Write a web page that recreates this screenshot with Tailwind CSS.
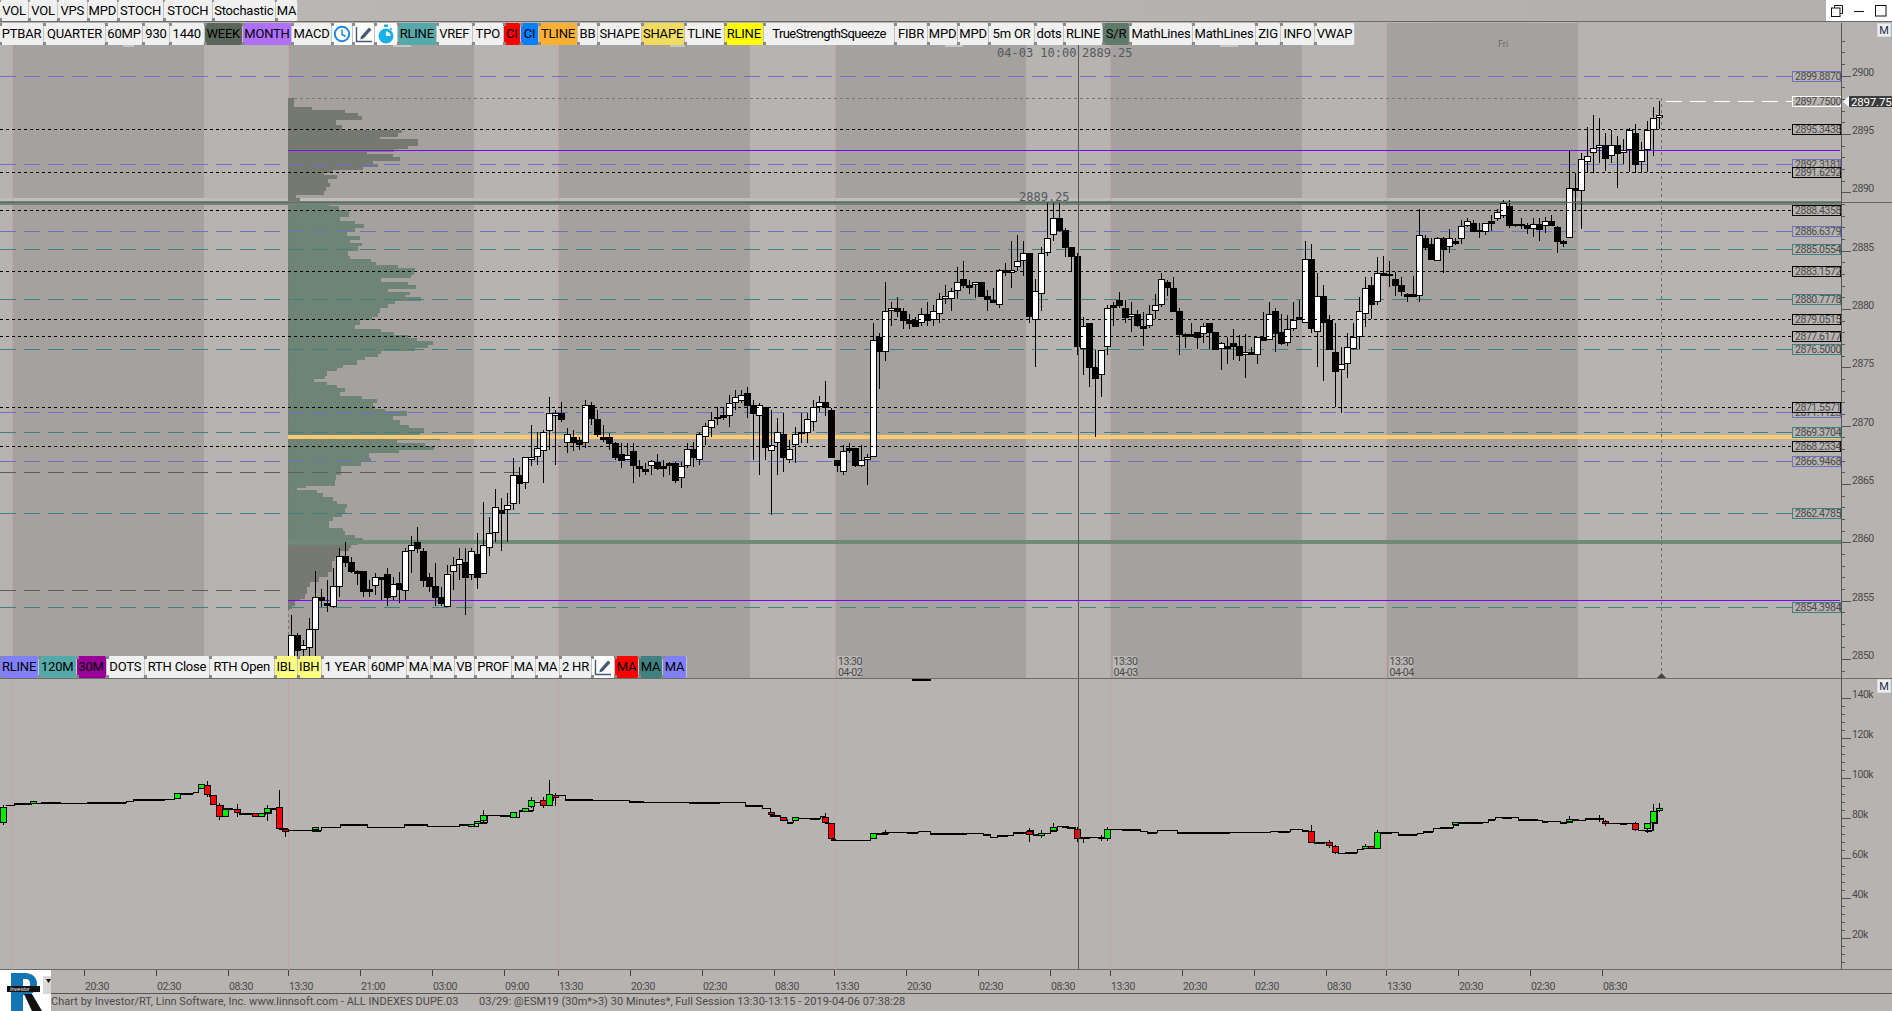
<!DOCTYPE html>
<html lang="en">
<head>
  <meta charset="UTF-8" />
  <title>Investor/RT Chart</title>
  <script src="https://cdn.jsdelivr.net/npm/@tailwindcss/browser@4"></script>
</head>
<body class="w-[1892px] h-[1011px] overflow-hidden flex flex-col bg-[#b7b3b1] font-['Roboto',sans-serif] text-black">

  <!-- top toolbar + window buttons -->
  <header class="h-[22px] shrink-0 flex justify-between border-b border-[#6a6a6a] bg-gradient-to-r from-[#bbb7b5] to-[#b3afad]">
    <div class="flex h-[21px] text-[13px] tracking-[-0.2px] [&>div]:relative [&>div]:flex [&>div]:items-center [&>div]:justify-center [&>div]:rounded-[2px] [&>div]:border-r [&>div]:border-[#c4c4c4] [&>div]:before:absolute [&>div]:before:-left-px [&>div]:before:top-0 [&>div]:before:size-[2px] [&>div]:before:bg-[#9a9a9a] [&>div]:after:absolute [&>div]:after:-left-px [&>div]:after:bottom-0 [&>div]:after:size-[3px] [&>div]:after:bg-[#8a8a8a]">
      <div class="w-[29px] bg-[#f0f0f0]">VOL</div>
      <div class="w-[29px] bg-[#f0f0f0]">VOL</div>
      <div class="w-[29.5px] bg-[#f0f0f0]">VPS</div>
      <div class="w-[30.5px] bg-[#f0f0f0]">MPD</div>
      <div class="w-[46px] bg-[#f0f0f0]">STOCH</div>
      <div class="w-[48.5px] bg-[#f0f0f0]">STOCH</div>
      <div class="w-[63.5px] bg-[#f0f0f0]">Stochastic</div>
      <div class="w-[22px] bg-[#f0f0f0]">MA</div>
    </div>
    <div class="w-[66px] h-[21px] bg-white flex items-center justify-center gap-[10px]">
      <svg width="12" height="12" viewBox="0 0 12 12" fill="none" stroke="#111"><path d="M3.5 3V.5h8v8H9" /><rect x=".5" y="3" width="8.5" height="8.5" /></svg>
      <svg width="12" height="12" viewBox="0 0 12 12" fill="none" stroke="#111"><path d="M1 6.5h10" /></svg>
      <svg width="12" height="12" viewBox="0 0 12 12" fill="none" stroke="#111"><rect x=".5" y=".5" width="10.500" height="10.500" /></svg>
    </div>
  </header>

  <!-- both chart panes -->
  <main class="relative h-[948px] shrink-0 border-b border-[#6a6a6a]">
    <svg id="chart" class="absolute inset-0" width="1892" height="948" viewBox="0 22 1892 948" shape-rendering="crispEdges"></svg>

    <!-- overlay toolbar on top of the price pane -->
    <div class="absolute left-0 top-px flex h-[21.5px] text-[13px] tracking-[-0.2px] [&>div]:relative [&>div]:flex [&>div]:items-center [&>div]:justify-center [&>div]:rounded-[2px] [&>div]:border-r [&>div]:border-[#c4c4c4] [&>div]:before:absolute [&>div]:before:-left-px [&>div]:before:top-0 [&>div]:before:size-[3px] [&>div]:before:bg-[#8a8a8a] [&>div]:after:absolute [&>div]:after:-left-px [&>div]:after:bottom-0 [&>div]:after:size-[3px] [&>div]:after:bg-[#8a8a8a]">
      <div class="w-[44px] bg-[#f0f0f0]">PTBAR</div>
      <div class="w-[62px] bg-[#f0f0f0]">QUARTER</div>
      <div class="w-[37px] bg-[#f0f0f0]">60MP</div>
      <div class="w-[27px] bg-[#f0f0f0]">930</div>
      <div class="w-[34.5px] bg-[#f0f0f0]">1440</div>
      <div class="w-[38.5px] bg-[#596659]">WEEK</div>
      <div class="w-[49px] bg-[#b070ff]">MONTH</div>
      <div class="w-[40px] bg-[#f0f0f0]">MACD</div>
      <div class="w-[21px] bg-white">
        <svg width="18" height="18" viewBox="0 0 18 18" fill="none" stroke="#1e88e5"><circle cx="9" cy="9" r="7.200" stroke-width="2" /><path d="M9 4.500V9.500L12.500 11.500" stroke-width="1.500" /></svg>
      </div>
      <div class="w-[22px] bg-white">
        <svg width="18" height="18" viewBox="0 0 18 18"><path d="M6 11.500L14 2.500l2.500 2.200L8.500 13.500 5.300 14.500z" fill="#46586f" /><path d="M1.500 2v14.500H17" fill="none" stroke="#46586f" stroke-width="1.400" /></svg>
      </div>
      <div class="w-[23px] bg-white">
        <svg width="18" height="20" viewBox="0 0 18 20"><rect x="7" y="0.500" width="4" height="2.500" fill="#1ab0e8" /><path d="M13.500 3.500l2 1.800-1 1-2-1.800z" fill="#1ab0e8" /><circle cx="9" cy="12" r="7.500" fill="#1ab0e8" /><path d="M9 12V7.500A4.500 4.500 0 0 1 13.500 12z" fill="#fff" /></svg>
      </div>
      <div class="w-[38.5px] bg-[#55aaa9]">RLINE</div>
      <div class="w-[36.5px] bg-[#f0f0f0]">VREF</div>
      <div class="w-[30.5px] bg-[#f0f0f0]">TPO</div>
      <div class="w-[17.5px] bg-[#ff0000]">CI</div>
      <div class="w-[18px] bg-[#0080ff]">CI</div>
      <div class="w-[39px] bg-[#ffb030]">TLINE</div>
      <div class="w-[20px] bg-[#f0f0f0]">BB</div>
      <div class="w-[44px] bg-[#f0f0f0]">SHAPE</div>
      <div class="w-[43px] bg-[#f0dc60]">SHAPE</div>
      <div class="w-[39.5px] bg-[#f0f0f0]">TLINE</div>
      <div class="w-[39.5px] bg-[#ffff00]">RLINE</div>
      <div class="w-[131px] bg-[#f0f0f0] tracking-[-0.55px]">TrueStrengthSqueeze</div>
      <div class="w-[33px] bg-[#f0f0f0]">FIBR</div>
      <div class="w-[30px] bg-[#f0f0f0]">MPD</div>
      <div class="w-[31px] bg-[#f0f0f0]">MPD</div>
      <div class="w-[46px] bg-[#f0f0f0]">5m OR</div>
      <div class="w-[29px] bg-[#f0f0f0]">dots</div>
      <div class="w-[39px] bg-[#f0f0f0]">RLINE</div>
      <div class="w-[27px] bg-[#607a6a]">S/R</div>
      <div class="w-[63px] bg-[#f0f0f0]">MathLines</div>
      <div class="w-[63px] bg-[#f0f0f0]">MathLines</div>
      <div class="w-[25px] bg-[#f0f0f0]">ZIG</div>
      <div class="w-[34px] bg-[#f0f0f0]">INFO</div>
      <div class="w-[40px] bg-[#f0f0f0]">VWAP</div>
    </div>

    <!-- overlay toolbar at the bottom of the price pane -->
    <div class="absolute left-0 top-[634px] flex h-[22px] text-[13px] tracking-[-0.2px] [&>div]:relative [&>div]:flex [&>div]:items-center [&>div]:justify-center [&>div]:rounded-[2px] [&>div]:border-r [&>div]:border-[#c4c4c4] [&>div]:before:absolute [&>div]:before:-left-px [&>div]:before:top-0 [&>div]:before:size-[3px] [&>div]:before:bg-[#8a8a8a] [&>div]:after:absolute [&>div]:after:-left-px [&>div]:after:bottom-0 [&>div]:after:size-[3px] [&>div]:after:bg-[#8a8a8a]">
      <div class="w-[39px] bg-[#8080ff]">RLINE</div>
      <div class="w-[37.5px] bg-[#55aaa9]">120M</div>
      <div class="w-[30px] bg-[#990099]">30M</div>
      <div class="w-[38.5px] bg-[#f0f0f0]">DOTS</div>
      <div class="w-[65px] bg-[#f0f0f0]">RTH Close</div>
      <div class="w-[64.500px] bg-[#f0f0f0]">RTH Open</div>
      <div class="w-[23px] bg-[#ffff80]">IBL</div>
      <div class="w-[24.500px] bg-[#ffff80]">IBH</div>
      <div class="w-[47px] bg-[#f0f0f0]">1 YEAR</div>
      <div class="w-[38px] bg-[#f0f0f0]">60MP</div>
      <div class="w-[24px] bg-[#f0f0f0]">MA</div>
      <div class="w-[23.500px] bg-[#f0f0f0]">MA</div>
      <div class="w-[20.500px] bg-[#f0f0f0]">VB</div>
      <div class="w-[37px] bg-[#f0f0f0]">PROF</div>
      <div class="w-[24px] bg-[#f0f0f0]">MA</div>
      <div class="w-[24px] bg-[#f0f0f0]">MA</div>
      <div class="w-[32px] bg-[#f0f0f0]">2 HR</div>
      <div class="w-[23px] bg-white">
        <svg width="18" height="18" viewBox="0 0 18 18"><path d="M6 11.500L14 2.500l2.500 2.200L8.500 13.500 5.300 14.500z" fill="#46586f" /><path d="M1.500 2v14.500H17" fill="none" stroke="#46586f" stroke-width="1.400" /></svg>
      </div>
      <div class="w-[24px] bg-[#ff0000]">MA</div>
      <div class="w-[24px] bg-[#408080]">MA</div>
      <div class="w-[24px] bg-[#8080ff]">MA</div>
    </div>

    <!-- "M" scale buttons -->
    <div class="absolute left-[1877px] top-px size-[14px] flex items-center justify-center bg-[#f0f0f0] border border-[#d8d8d8] text-[11px] leading-none text-[#202a50]">M</div>
    <div class="absolute left-[1877px] top-[657px] size-[14px] flex items-center justify-center bg-[#f0f0f0] border border-[#d8d8d8] text-[11px] leading-none text-[#202a50]">M</div>
  </main>

  <!-- logo, time axis and status line -->
  <footer class="flex flex-1 min-h-0">
    <div class="w-[51px] shrink-0 bg-white relative">
      <svg width="51" height="41" viewBox="0 0 51 41" shape-rendering="geometricPrecision">
        <path d="M11 3h14c8 0 12 5 12 11s-4 11-11 11h-3v16H11z M23 9v10h2c4 0 5-2 5-5s-1-5-5-5z" fill="#1474b4" fill-rule="evenodd" />
        <path d="M24 24h8l10 17H32z" fill="#111" />
        <rect x="7" y="16" width="33" height="6" fill="#111" />
        <text x="10" y="21" font-size="5.500" font-style="italic" font-family="Liberation Sans" fill="#fff">Investor</text>
        <rect x="43" y="6" width="8" height="18" fill="#d8d8d8" />
        <path d="M46 9h5l-2.500 4z" fill="#111" />
      </svg>
    </div>
    <div class="flex-1 flex flex-col min-w-0">
      <div class="h-[24px] shrink-0 border-b border-[#555]">
        <svg id="timeaxis" class="block" width="1841" height="23" viewBox="51 0 1841 23"></svg>
      </div>
      <div class="flex h-[17px] items-center text-[11px] tracking-[0.03px] text-[#4a4a4a] whitespace-nowrap">
        <span class="w-[428px]">Chart by Investor/RT, Linn Software, Inc. www.linnsoft.com - ALL INDEXES DUPE.03</span>
        <span>03/29: @ESM19 (30m*>3) 30 Minutes*, Full Session 13:30-13:15 - 2019-04-06 07:38:28</span>
      </div>
    </div>
  </footer>

  <script>
    const LABEL = 'font-family="Roboto" font-size="10.500" letter-spacing="-0.45" fill="#4a4a4a" shape-rendering="auto"';
    const BLUE = '#7070c0', TEAL = '#3f8080', BLK = '#000';
    const priceY = p => 75.7 + (2900 - p) * 11.666;
    let s = '';

    // ---- session bands + pane background
    [[12.5, 191.5], [288, 186], [558.5, 191.5], [835, 191], [1110.5, 191.5], [1386.5, 191.5]].forEach(b => {
      s += `<rect x="${b[0]}" y="23" width="${b[1]}" height="175" fill="#a5a19f" /><rect x="${b[0]}" y="205" width="${b[1]}" height="473" fill="#a5a19f" />`;
    });
    s += `<rect x="0" y="198" width="1841" height="3" fill="#bfbdb9" />`;
    [12, 288, 558, 835, 1110, 1386].forEach(x => {
      s += `<line x1="${x + .5}" y1="23" x2="${x + .5}" y2="970" stroke="#c8a2a2" />`;
    });

    // ---- volume profile: [zoomY, zoomX] steps
    const prof = [[25,40],[35,42],[50,96],[60,192],[68,230],[77,243],[90,165],[103,183],[117,360],[127,348],[138,296],[146,408],[165,380],[175,336],[183,258],[190,333],[198,354],[210,275],[218,291],[228,246],[236,156],[245,130],[250,168],[262,142],[275,147],[288,135],[300,130],[312,48],[320,60],
      [333,145],[343,175],[355,205],[375,178],[388,222],[397,249],[408,222],[420,198],[433,237],[445,207],[452,243],[462,230],[476,200],[490,207],[500,270],[510,285],[518,348],[527,399],[537,396],[546,387],[557,298],[568,378],[578,402],[590,318],[597,384],[606,369],[613,417],[625,339],[632,320],[645,296],[660,291],[670,272],[680,237],[695,222],[708,300],[716,336],[725,379],[735,405],[743,453],[753,438],[763,399],[772,300],[780,291],[790,252],[800,228],[813,186],[822,168],[830,138],[845,133],[856,102],[865,138],[873,168],[882,192],[893,177],[905,243],[914,288],[925,276],[935,282],[945,312],[950,375],[963,333],[975,354],[990,381],[1000,426],[1012,414],[1020,474],[1035,345],[1044,429],[1053,456],[1065,351],[1075,264],[1090,270],[1100,241],[1113,180],[1130,181],[1140,165],[1155,162],[1170,78],[1176,50],[1183,110],[1192,128],[1205,158],[1215,168],[1225,198],[1235,192],[1250,183],[1262,158],[1275,144],[1295,186],[1305,193],[1315,222],[1325,246],[1335,231],
      [1345,210],[1355,205],[1365,178],[1380,162],[1392,153],[1410,155],[1425,142],[1440,115],[1455,90],[1470,80],[1490,75],[1505,60],[1512,45],[1525,35],[1535,22]];
    prof.forEach((r, i) => {
      if (i === prof.length - 1) return;
      const y = Math.round(90 + r[0] / 2.958), y2 = Math.round(90 + prof[i + 1][0] / 2.958);
      const w = Math.round(280 + r[1] / 2.958) - 288;
      const fill = y < 201 || y > 543 ? '#767872' : '#6e8476';
      if (w > 0 && y2 > y) s += `<rect x="288" y="${y}" width="${w}" height="${y2 - y}" fill="${fill}" />`;
    });
    s += `<line x1="288" y1="98" x2="288" y2="640" stroke="#777" stroke-dasharray="3 3" />`;

    // ---- thick levels
    s += `<rect x="0" y="201" width="1841" height="4" fill="#72837a" />`;
    s += `<rect x="288" y="435" width="1553" height="4" fill="#ffc972" />`;
    s += `<rect x="288" y="540" width="1553" height="4" fill="#708a78" />`;
    s += `<line x1="288" y1="150.5" x2="1840" y2="150.5" stroke="#8000ff" />`;
    s += `<line x1="288" y1="600.500" x2="1840" y2="600.500" stroke="#8000ff" />`;
    s += `<line x1="288" y1="98.500" x2="1661" y2="98.500" stroke="#777" stroke-dasharray="3 3" />`;
    s += `<line x1="0" y1="472.500" x2="522" y2="472.500" stroke="#5c5c5c" stroke-dasharray="16 8" />`;
    s += `<line x1="0" y1="590.500" x2="288" y2="590.500" stroke="#5c5c5c" stroke-dasharray="16 8" />`;

    // ---- levels with tags on the right
    const levels = [
      ['2899.8870', 76.5, BLUE], ['2892.3181', 164.5, BLUE], ['2886.6379', 231.5, BLUE], ['2885.0554', 249.5, TEAL],
      ['2880.7778', 299.5, TEAL], ['2876.5000', 349.5, TEAL], ['2871.1123', 412.5, BLUE], ['2869.3704', 432.5, TEAL],
      ['2866.9468', 461.5, BLUE], ['2862.4785', 513.5, TEAL], ['2854.3984', 607.5, TEAL],
      ['2895.3438', 129.5, BLK], ['2891.6292', 172.5, BLK], ['2888.4358', 210.5, BLK], ['2883.1572', 271.5, BLK],
      ['2879.0515', 319.5, BLK], ['2877.6177', 336.5, BLK], ['2871.5571', 407.5, BLK], ['2868.2334', 446.5, BLK],
      ['2897.7500', 101.5, '#fff']
    ];
    const levelLine = l => `<line x1="${l[2] === '#fff' ? 1666 : 0}" y1="${l[1]}" x2="1792" y2="${l[1]}" stroke="${l[2]}" stroke-dasharray="${l[2] === BLK ? '3 3' : '16 8'}" />`;
    levels.filter(l => l[2] !== BLK).forEach(l => s += levelLine(l));

    // ---- price candles: [white, bodyTop, bodyBottom, wickTop, wickBottom] read off at 3x
    const candles = [];
    const addCandles = (base, rows) => rows.forEach(r => candles.push(r.map((v, i) => i ? base + v / 3 : v)));
    addCandles(400, [[1,706,768,645,790],[0,706,750,700,770],[1,734,748,720,770],[1,688,740,655,770],[1,592,686,513,770],[0,592,600,567,620],[0,610,614,540,635],[1,559,617,505,625],[1,469,557,445,590],[0,469,486,427,500],[0,487,513,470,520],[0,514,518,510,555],[0,514,572,514,590],[0,568,572,540,590],[1,532,556,520,585],[0,532,536,530,600],[0,523,590,505,618],[1,551,589,530,600],[0,550,567,515,610],[1,454,571,445,600],[1,436,451,408,520],[0,427,444,380,460],[0,454,539,445,560],[0,531,558,520,575],[0,559,590,490,618],[0,591,608,560,618],[1,523,617,495,620],[1,496,512,470,570],[1,478,493,445,540],[0,487,530,445,645],[1,454,521,445,540],[0,463,530,400,567],[1,436,520,305,520],[1,400,442,350,467],[1,322,397,268,425],[0,331,338,295,452],[1,314,328,278,425],[1,226,310,175,330],[0,226,248,200,313],[1,172,247,170,267],[1,172,178,75,198],[1,145,169,95,195],[1,95,151,90,248],[1,40,91,-10,150],[1,40,44,30,195],[0,39,56,5,65],[1,103,127,85,160],[0,112,127,90,152],[0,121,133,110,150],[1,16,127,0,145],[0,16,55,5,75],[0,58,102,30,110],[0,112,116,75,125],[0,112,128,100,150],[0,130,170,125,180],[0,163,179,130,205],[1,164,177,130,180],[0,154,196,130,248],[0,199,203,180,230],[0,208,212,190,225],[1,182,196,180,225],[0,187,205,162,210],[0,199,203,180,232],[0,190,196,185,225],[0,190,241,185,250],[1,199,232,185,265],[1,146,195,130,205],[0,146,170,125,200],[1,103,178,95,195],[1,77,109,70,135],[1,59,82,35,110],[1,50,54,20,75],[0,45,50,20,60],[1,8,46,-15,80],[1,-10,6,-30,30],[1,-15,0,-30,8],[0,-22,14,-40,55],[0,14,38,0,180],[1,16,46,10,225],[0,22,142,22,180]]);
    addCandles(180, [[1,796,810,690,1005],[1,755,787,715,885],[0,762,830,700,875],[1,806,838,780,850],[1,763,793,740,850],[1,755,760,700,790],[1,718,757,700,790],[1,682,724,660,752],[1,667,679,648,695],[0,667,680,603,708],[0,691,830,685,835],[0,841,856,840,875],[1,814,874,795,885],[0,805,810,790,820],[0,805,856,805,860],[1,841,856,795,860],[1,832,838,822,915],[1,481,829,430,832],[0,472,514,458,628],[1,394,514,306,543],[1,385,391,366,437],[0,385,392,350,412],[0,394,419,385,446],[0,420,428,403,446],[0,420,437,410,437],[1,403,427,384,437],[0,403,419,367,437],[1,394,418,375,437],[1,358,400,340,428],[1,349,355,315,373],[1,334,355,325,392],[1,307,331,262,357],[0,298,314,243,325],[0,316,320,300,343],[1,307,313,305,355],[0,307,347,305,350],[0,349,356,330,392],[0,361,365,325,370],[1,271,373,268,383],[0,271,276,250,287],[1,271,277,183,323],[1,244,259,166,272],[1,220,241,183,288],[0,220,409,220,428],[1,334,418,297,560],[1,220,340,202,392],[1,175,217,68,228],[1,115,163,68,182],[0,115,150,68,155]]);
    addCandles(170, [[0,179,230,175,262],[0,232,257,232,305],[0,258,527,250,555],[1,469,535,440,615],[0,460,590,460,650],[0,592,623,540,800],[1,539,613,539,680],[1,415,527,405,555],[0,406,412,395,468],[0,390,404,365,415],[0,415,440,390,458],[1,433,439,397,485],[0,433,466,420,470],[0,469,473,425,527],[1,433,466,405,475],[1,406,421,372,448],[1,328,403,308,412],[0,337,352,330,378],[0,355,422,320,422],[0,424,491,415,555],[0,493,497,490,535],[0,493,498,460,498],[0,487,500,487,537],[1,469,490,460,518],[0,460,486,458,538],[0,487,536,487,538],[1,520,535,515,600],[0,529,533,500,582],[0,520,527,478,570],[0,529,554,495,572],[1,547,553,492,623],[0,547,552,530,555],[1,502,553,500,582],[0,502,509,425,512],[1,433,508,395,510],[0,424,490,415,545],[0,487,518,432,525],[1,478,517,435,527],[1,451,475,397,482],[0,442,448,390,450],[1,268,457,213,460],[0,268,475,222,490],[1,379,484,310,590],[0,379,457,345,632],[0,451,536,435,538],[0,547,604,460,712],[1,583,598,530,728],[1,530,580,488,623],[1,502,535,460,540],[1,424,499,380,538],[1,355,430,320,470],[0,346,403,320,448],[1,310,394,260,405],[0,310,316,258,318],[0,312,316,272,350],[0,328,344,305,378],[0,346,362,320,378],[0,373,377,368,395],[0,373,377,318,380],[1,196,376,118,395],[0,205,230,196,240],[0,223,266,205,268],[1,205,271,200,272],[0,205,236,200,308],[1,205,228,178,250],[0,214,218,205,225],[1,169,203,150,222],[1,154,166,145,170],[0,160,182,150,182],[0,179,181,160,205],[1,160,184,158,195],[0,154,158,135,182],[1,127,143,118,152]]);
    addCandles(0, [[1,610,644,600,655],[0,618,676,600,685],[0,672,676,672,680],[0,672,676,655,688],[0,676,684,670,702],[1,671,684,655,712],[0,671,686,655,722],[1,664,676,650,700],[0,664,676,645,678],[0,680,722,678,758],[0,724,728,720,740],[1,565,712,450,712],[0,565,571,520,634],[1,478,571,460,688],[1,469,484,382,520],[1,445,457,345,520],[1,436,442,355,490],[0,436,475,400,513],[1,436,466,390,490],[0,436,458,408,563],[1,451,456,418,492],[1,391,448,385,515],[0,400,492,372,520],[1,451,484,426,520],[1,391,448,362,515],[1,355,388,322,468],[1,346,352,303,388]]);
    candles.forEach((c, n) => {
      const cx = 291.5 + 6 * n, t = Math.round(c[1]), b = Math.max(Math.round(c[2]), t + 1);
      s += `<line x1="${cx}" y1="${Math.round(c[3])}" x2="${cx}" y2="${Math.round(c[4])}" stroke="#000" />`;
      s += `<rect x="${cx - 3}" y="${t + .5}" width="6" height="${b - t}" fill="${c[0] ? '#fff' : '#000'}" stroke="#000" />`;
    });
    levels.filter(l => l[2] === BLK).forEach(l => s += levelLine(l));

    // ---- lower pane: step line + coloured bars
    const pts = [];
    const addPts = (x0, sx, base, rows) => rows.forEach(r => pts.push([Math.round(x0 + r[0] / sx), Math.round(base + r[1] / 3)]));
    addPts(0, 2.178, 640, [[14,495],[30,490],[70,490],[90,485],[130,490],[190,486],[275,483],[290,477],[360,478],[380,460],[420,455],[432,440],[445,437],[455,465],[470,495],[485,505],[505,508],[520,520],[580,520],[590,505],[607,505],[607,565],[625,570],[680,570],[700,560],[740,552],[800,560],[880,552],[930,557],[1000,552],[1020,558],[1040,545],[1060,525],[1090,525],[1115,530],[1130,510],[1160,485],[1190,480],[1205,465],[1230,478],[1290,480],[1370,482],[1400,485],[1500,487],[1568,487]]);
    addPts(0, 1, 0, [[745,2415],[762,2424],[770,2445]]);
    addPts(780, 3, 640, [[0,536],[20,545],[40,535],[90,533],[120,528],[136,530],[136,548],[154,596],[165,600],[270,600],[270,580],[290,580],[325,575],[380,575],[415,573],[450,578],[560,578],[610,583],[630,590],[650,585],[685,585],[700,575],[740,570],[760,583],[790,580],[810,570],[830,557],[860,560],[885,567],[900,590],[930,590],[975,592],[985,568],[1025,568],[1080,573],[1100,575],[1130,570],[1190,575],[1350,576],[1470,572]]);
    addPts(1270, 3, 780, [[0,152],[25,152],[60,148],[95,150],[115,152],[133,186],[165,186],[187,198],[205,218],[225,215],[260,208],[280,198],[312,202],[330,155],[365,155],[385,161],[440,160],[460,153],[490,145],[510,140],[548,135],[565,125],[640,125],[655,118],[675,112],[695,110],[725,112],[745,118],[800,120],[815,122],[835,122],[870,127],[890,125],[905,118],[925,120],[945,113],[985,115],[1000,125],[1015,128],[1050,130],[1070,128],[1085,128],[1105,150],[1125,150],[1145,128],[1160,88],[1178,86]]);
    // thin line with every other flat run doubled, like the low-volume bars
    s += `<path d="M${pts[0][0]} ${pts[0][1] + .5}${pts.slice(1).map(p => `H${p[0]}V${p[1] + .5}`).join('')}" fill="none" stroke="#000" />`;
    pts.forEach((p, i) => {
      if (i && i % 2 === 0) s += `<rect x="${pts[i - 1][0]}" y="${pts[i - 1][1]}" width="${Math.max(p[0] - pts[i - 1][0], 0)}" height="2" fill="#000" />`;
    });

    // [x, top, bottom, green, wickTop, wickBottom]
    const bars = [];
    const addBars = (base, rows) => rows.forEach(r => bars.push([r[0], ...r.slice(1, 3).map(v => base + v / 3), r[3], ...r.slice(4).map(v => base + v / 3)]));
    addBars(640, [[3.5,500,545,1,495,555],[33.5,484,490,1],[177,458,475,1],[201.5,432,445,1],[207.5,434,462,0,424,470],[213.5,465,493,0],[219.5,496,528,0,490,540],[225.5,508,528,1],[237.5,506,516,0,493,530],[255.5,520,527,0],[261.5,520,528,1],[267.5,503,516,1,495,542],[279.5,502,563,0,450,565],[285.5,566,574,0,564,590],[315.5,562,568,1],[471,553,558,1],[477.5,544,550,1],[483.5,526,540,1,510,545],[513.5,515,532,1],[525,503,514,1],[531,479,498,1,470,505],[543,479,495,0,470,505],[549,463,495,1,420,495],[555,466,472,0,460,497],
      [771,516,522,0],[783.3,532,540,0],[795,532,540,1],[825,530,547,0,518,553],[831,550,595,0],[873,578,595,1],[885,575,579,1,570,585],[1029,572,583,0,565,605],[1041,580,586,1,570,595],[1053,560,571,1,548,575],[1065,557,562,0],[1077,568,595,0,560,605],[1083,591,595,1,590,608],[1101,591,595,0,585,602],[1107,568,595,1,562,603]]);
    addBars(780, [[1311.3,152,185,0,136,186],[1329.3,187,196,0,180,205],[1335.3,199,215,0,195,222],[1365.3,197,203,1,192,205],[1371.3,197,204,0],[1377.3,157,203,1,150,204],[1455.3,127,133,1],[1569.3,116,124,1,108,126],[1599.3,113,118,0,105,125],[1605.3,122,130,0,120,137],[1635.3,128,146,0,126,152],[1647.3,130,145,1,128,158],[1653.3,92,127,1,72,152],[1659.3,85,90,1,70,95]]);
    bars.forEach(b => {
      const cx = 3.5 + 6 * Math.round((b[0] - 3.5) / 6), t = Math.round(b[1]), h = Math.max(Math.round(b[2]) - t, 1);
      if (b[4]) s += `<line x1="${cx}" y1="${Math.round(b[4])}" x2="${cx}" y2="${Math.round(b[5])}" stroke="#000" />`;
      s += `<rect x="${cx - 3}" y="${t + .5}" width="6" height="${h}" fill="${b[3] ? '#00ee00' : '#ff0000'}" stroke="#000" />`;
    });

    // ---- crosshair, markers, pane frame
    s += `<line x1="1661.500" y1="98" x2="1661.500" y2="674" stroke="#6e6e6e" stroke-dasharray="3 3" />`;
    s += `<path d="M1661.500 673L1657 678H1666z" fill="#444" shape-rendering="auto" />`;
    s += `<line x1="1078.500" y1="45" x2="1078.500" y2="969" stroke="#555" />`;
    s += `<line x1="0" y1="202.500" x2="1892" y2="202.500" stroke="#666" />`;
    s += `<line x1="0" y1="678.500" x2="1892" y2="678.500" stroke="#6c6c6c" />`;
    s += `<line x1="1841.500" y1="23" x2="1841.500" y2="969" stroke="#555" />`;
    s += `<rect x="912" y="679" width="19" height="2" fill="#000" />`;
    [[123, 11], [393, 18], [670, 15], [945, 18], [1220, 18]].forEach(t => {
      s += `<rect x="${t[0]}" y="44" width="${t[1]}" height="3" fill="#c8c6c4" />`;
    });

    // tags on the level lines
    const tag = l => `<rect x="1792.500" y="${l[1] - 5}" width="48" height="10" fill="#b7b3b1" stroke="${l[2]}" /><text x="1795" y="${l[1] + 3.5}" ${LABEL}>${l[0]}</text>`;
    levels.forEach(l => s += tag(l));

    // right scales
    for (let p = 2849; p <= 2903; p++) {
      const y = Math.round(priceY(p)) + .5, major = p % 5 === 0;
      s += `<line x1="1842" y1="${y}" x2="${major ? 1851 : 1845}" y2="${y}" stroke="#555" />`;
      if (major) s += `<text x="1852" y="${y - .5}" ${LABEL}>${p}</text>`;
    }
    ['140k', '120k', '100k', '80k', '60k', '40k', '20k'].forEach((t, i) => {
      const y = 698.5 + 40 * i;
      for (let j = 1; j < 5; j++) s += `<line x1="1842" y1="${y + 8 * j}" x2="1845" y2="${y + 8 * j}" stroke="#555" />`;
      s += `<line x1="1842" y1="${y}" x2="1851" y2="${y}" stroke="#555" /><text x="1852" y="${y - .5}" ${LABEL}>${t}</text>`;
    });

    // last price tag
    s += `<path d="M1843 101.500L1849 96V107z" fill="#fff" shape-rendering="auto" /><rect x="1849" y="96" width="43" height="11" fill="#3c3c3c" />`;
    s += `<text x="1851" y="105.500" font-family="Roboto" font-size="11.500" letter-spacing="-0.2" fill="#fff" shape-rendering="auto">2897.75</text>`;

    // floating texts
    s += `<text x="997" y="57" font-family="DejaVu Sans Mono" font-size="12" fill="#4f5a60" shape-rendering="auto">04-03 10:00</text>`;
    s += `<text x="1082" y="57" font-family="DejaVu Sans Mono" font-size="12" fill="#4f5a60" shape-rendering="auto">2889.25</text>`;
    s += `<text x="1019" y="201" font-family="DejaVu Sans Mono" font-size="12" fill="#4f5a60" shape-rendering="auto">2889.25</text>`;
    s += `<text x="1498" y="47" font-family="Roboto" font-size="9" fill="#6a6a6a" shape-rendering="auto">Fri</text>`;
    [[837, '04-02'], [1112.5, '04-03'], [1388.500, '04-04']].forEach(d => {
      s += `<rect x="${d[0]}" y="656" width="24" height="21" fill="#b9b6b4" />`;
      s += `<text x="${d[0] + 1}" y="665" ${LABEL}>13:30</text><text x="${d[0] + 1}" y="676" ${LABEL}>${d[1]}</text>`;
    });
    document.getElementById('chart').innerHTML = s;

    // ---- time axis
    const times = ['20:30','02:30','08:30','13:30','21:00','03:00','09:00','13:30','20:30','02:30','08:30','13:30','20:30','02:30','08:30','13:30','20:30','02:30','08:30','13:30','20:30','02:30','08:30'];
    const ticks = [84,156,228,288,360,432,504,558,630,702,774,834,906,978,1050,1110,1182,1254,1326,1386,1458,1530,1602];
    document.getElementById('timeaxis').innerHTML = times.map((t, i) =>
      `<line x1="${ticks[i] + .5}" y1="0" x2="${ticks[i] + .5}" y2="6" stroke="#444" /><text x="${ticks[i] + 1}" y="20" ${LABEL}>${t}</text>`).join('');
  </script>
</body>
</html>
